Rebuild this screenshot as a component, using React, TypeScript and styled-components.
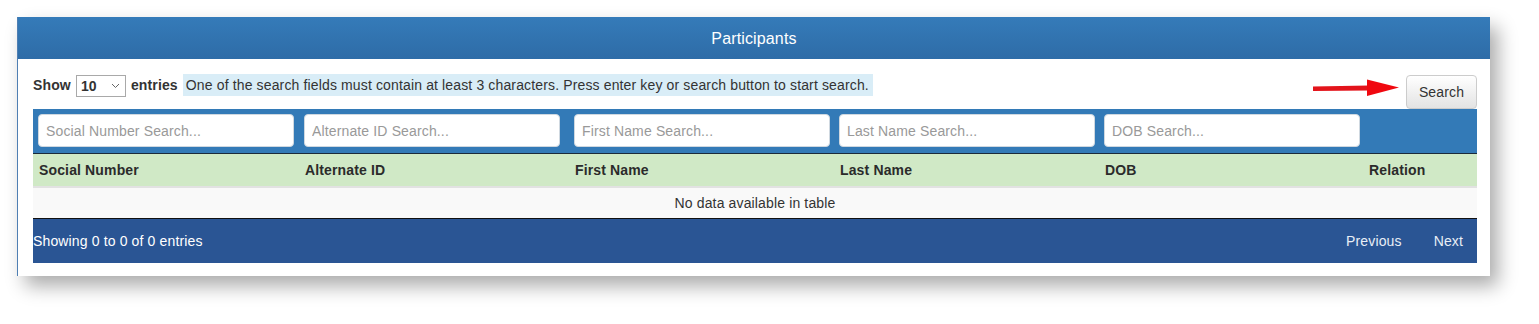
import { createGlobalStyle, styled } from 'styled-components';

const GlobalStyle = createGlobalStyle`
    body {
        margin: 0;
        background: #ffffff;
        font-family: "Liberation Sans", Arial, sans-serif;
        font-size: 14px;
        letter-spacing: 0.14px;
        color: #333;
    }
`;

const Page = styled.div`
    padding: 17px 0 0 17px;
    height: 324px;
    box-sizing: border-box;
`;

const Card = styled.section`
    width: 1473px;
    background: #fff;
    border-left: 1px solid #4f7fb3;
    box-sizing: border-box;
    box-shadow: 8px 10px 18px rgba(0, 0, 0, 0.33);
`;

const CardHeader = styled.header`
    height: 42px;
    padding-top: 1px;
    box-sizing: border-box;
    display: flex;
    align-items: center;
    justify-content: center;
    background: linear-gradient(#357bb9, #2e6ca7);
    color: #fff;
    font-size: 16px;
`;

const CardBody = styled.div`
    padding: 15px 13px 13px 15px;
`;

const TopRow = styled.div`
    display: flex;
    align-items: flex-start;
    justify-content: space-between;
    height: 35px;
`;

const LengthControl = styled.div`
    display: flex;
    align-items: center;
    height: 22px;
    font-weight: bold;
    gap: 4px;
`;

const LengthSelect = styled.div`
    width: 50px;
    height: 22px;
    box-sizing: border-box;
    border: 1px solid #a9a9a9;
    display: flex;
    align-items: center;
    justify-content: space-between;
    padding: 0 5px 0 4px;
    font-weight: bold;
    margin: 1px 1px 0;
`;

const InfoText = styled.span`
    margin-left: 1px;
    background: #d9edf7;
    font-weight: normal;
    height: 22px;
    line-height: 22px;
    padding: 0 4px 0 3px;
`;

const ActionGroup = styled.div`
    display: flex;
    align-items: flex-start;
`;

const Arrow = styled.svg`
    margin: 3px 6px 0 0;
`;

const SearchButton = styled.button`
    margin-top: 1px;
    width: 71px;
    height: 34px;
    border: 1px solid #ccc;
    border-radius: 4px;
    background: linear-gradient(#ffffff, #e3e3e3);
    color: #333;
    font-family: "Liberation Sans", Arial, sans-serif;
    font-size: 14px;
    letter-spacing: 0.14px;
    padding: 0;
`;

const ColumnGrid = styled.div`
    display: grid;
    grid-template-columns: 266px 270px 265px 265px 264px 1fr;
`;

const SearchBand = styled(ColumnGrid)`
    background: #337ab7;
    padding: 5px 0 6px;
    border-bottom: 1px solid #1b2a3a;
`;

const SearchCell = styled.div`
    padding-left: 5px;
`;

const SearchInput = styled.input`
    width: 256px;
    height: 33px;
    box-sizing: border-box;
    border: 1px solid #cfd8e0;
    border-radius: 4px;
    padding: 0 7px;
    font-family: "Liberation Sans", Arial, sans-serif;
    font-size: 14px;
    letter-spacing: 0.14px;
    color: #333;
    background: #fff;
    outline: none;

    &::placeholder {
        color: #999;
    }
`;

const HeadRow = styled(ColumnGrid)`
    background: #d0e9c6;
    height: 32px;
    border-bottom: 2px solid #e2e2e2;
    align-items: center;
`;

const HeadCell = styled.div`
    padding-left: 6px;
    font-weight: bold;
    color: #2b2b2b;
`;

const EmptyRow = styled.div`
    height: 30px;
    background: #f9f9f9;
    display: flex;
    align-items: center;
    justify-content: center;
    border-bottom: 1px solid #111;
`;

const Footer = styled.footer`
    height: 44px;
    background: #2a5594;
    display: flex;
    align-items: center;
    justify-content: space-between;
    color: #fff;
    padding-right: 14px;
`;

const Pager = styled.div`
    display: flex;
    gap: 32px;
    color: #e8eef6;
`;

const searchFields = ['Social Number', 'Alternate ID', 'First Name', 'Last Name', 'DOB'];
const columns = ['Social Number', 'Alternate ID', 'First Name', 'Last Name', 'DOB', 'Relation'];

export default function App() {
    return (
        <>
            <GlobalStyle />
            <Page>
                <Card>
                    <CardHeader>Participants</CardHeader>
                    <CardBody>
                        <TopRow>
                            <LengthControl>
                                Show
                                <LengthSelect>
                                    10
                                    <svg width="9" height="6" viewBox="0 0 9 6">
                                        <path d="M1 1l3.5 3.5L8 1" fill="none" stroke="#666" strokeWidth="1" />
                                    </svg>
                                </LengthSelect>
                                entries
                                <InfoText>One of the search fields must contain at least 3 characters. Press enter key or search button to start search.</InfoText>
                            </LengthControl>
                            <ActionGroup>
                                <Arrow width="88" height="22" viewBox="0 0 88 22">
                                    <path d="M1 9.5 L57 8.5 L57 13.5 L1 14 Z" fill="#e3141b" />
                                    <path d="M55 2.5 L87 10.5 L55 19 Z" fill="#f0080f" />
                                </Arrow>
                                <SearchButton>Search</SearchButton>
                            </ActionGroup>
                        </TopRow>
                        <SearchBand>
                            {searchFields.map((f) => (
                                <SearchCell key={f}>
                                    <SearchInput placeholder={`${f} Search...`} />
                                </SearchCell>
                            ))}
                        </SearchBand>
                        <HeadRow>
                            {columns.map((c) => (
                                <HeadCell key={c}>{c}</HeadCell>
                            ))}
                        </HeadRow>
                        <EmptyRow>No data available in table</EmptyRow>
                        <Footer>
                            <span>Showing 0 to 0 of 0 entries</span>
                            <Pager>
                                <span>Previous</span>
                                <span>Next</span>
                            </Pager>
                        </Footer>
                    </CardBody>
                </Card>
            </Page>
        </>
    );
}
